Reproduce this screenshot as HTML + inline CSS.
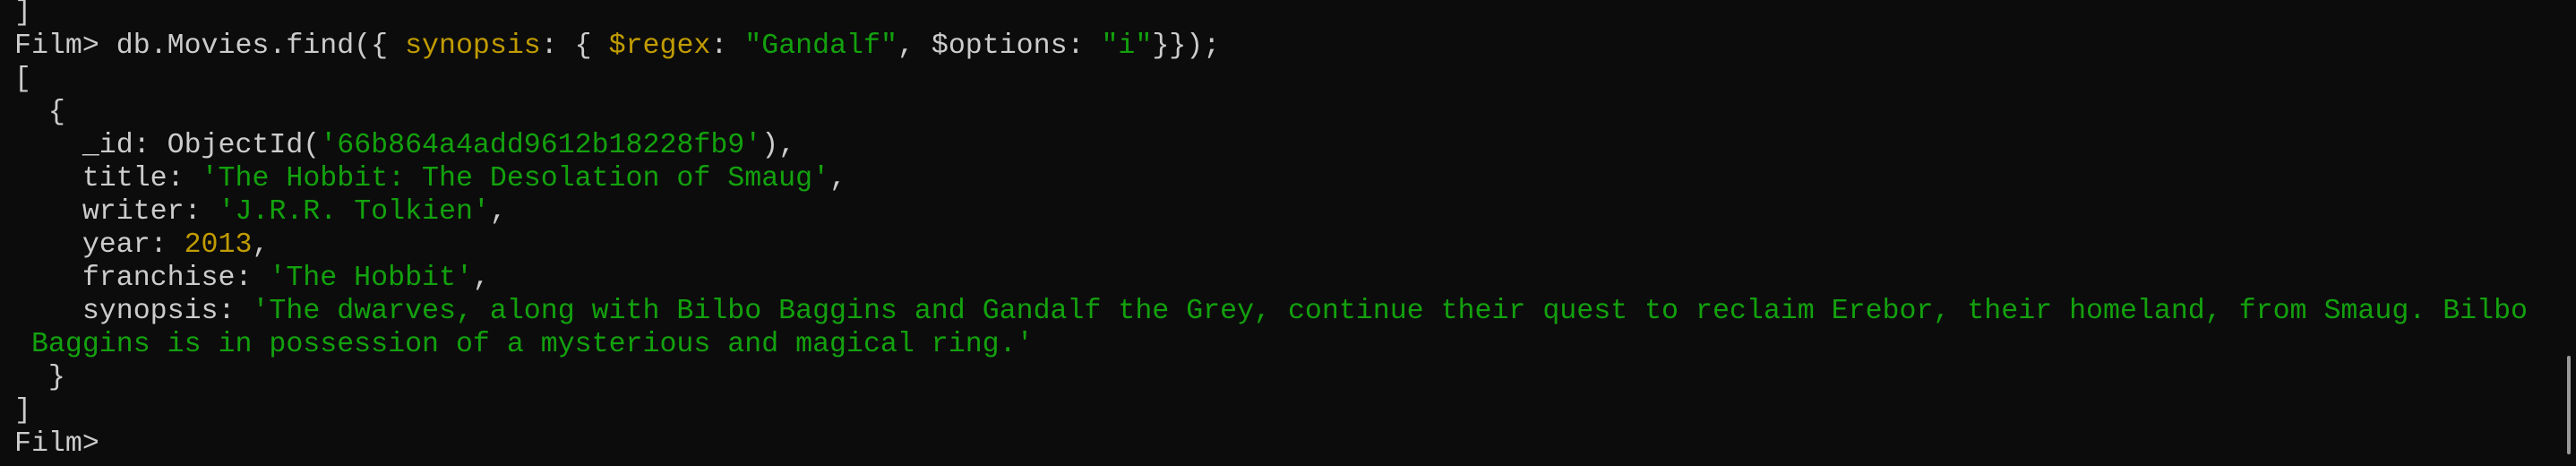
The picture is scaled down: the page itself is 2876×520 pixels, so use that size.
<!DOCTYPE html>
<html><head><meta charset="utf-8"><style>
html,body{margin:0;padding:0;background:#0c0c0c;width:2876px;height:520px;overflow:hidden}
pre{margin:0;position:absolute;left:16px;top:-4px;font-family:"Liberation Mono",monospace;font-size:31.6px;line-height:37px;color:#cccccc;white-space:pre}
.g{color:#13a10e}.y{color:#c19c00}
.sb{position:absolute;left:2866px;top:397px;width:4px;height:110px;background:#9a9a9a;border-radius:2px}
</style></head><body>
<pre>]
Film&gt; db.Movies.find({ <span class="y">synopsis</span>: { <span class="y">$regex</span>: <span class="g">"Gandalf"</span>, $options: <span class="g">"i"</span>}});
[
  {
    _id: ObjectId(<span class="g">'66b864a4add9612b18228fb9'</span>),
    title: <span class="g">'The Hobbit: The Desolation of Smaug'</span>,
    writer: <span class="g">'J.R.R. Tolkien'</span>,
    year: <span class="y">2013</span>,
    franchise: <span class="g">'The Hobbit'</span>,
    synopsis: <span class="g">'The dwarves, along with Bilbo Baggins and Gandalf the Grey, continue their quest to reclaim Erebor, their homeland, from Smaug. Bilbo
 Baggins is in possession of a mysterious and magical ring.'</span>
  }
]
Film&gt; </pre>
<div class="sb"></div>
</body></html>
